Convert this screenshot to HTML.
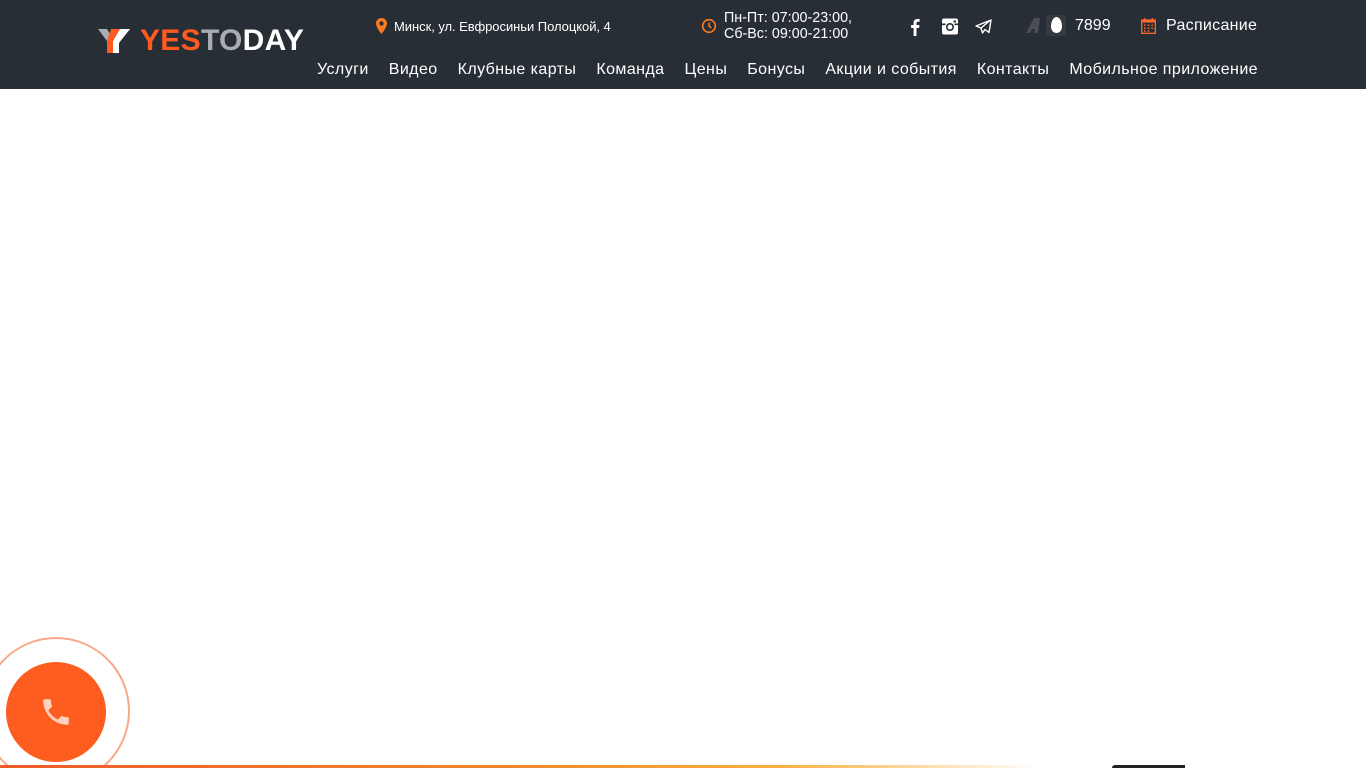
<!DOCTYPE html>
<html><head><meta charset="utf-8"><style>
*{margin:0;padding:0;box-sizing:border-box}
html,body{width:1366px;height:768px;overflow:hidden}
body{background:#fff;font-family:"Liberation Sans",sans-serif;position:relative}
.hdr{position:absolute;left:0;top:0;width:1366px;height:89px;background:#282e35;color:#fff}
.abs{position:absolute;white-space:nowrap}
.logo{left:140px;top:24px;font-size:30px;font-weight:bold;letter-spacing:0.3px;line-height:34px}
.nav{top:61px;right:108px;font-size:16px;letter-spacing:0.42px}
.nav span{margin-left:20px}
</style></head><body>
<div class="hdr">
<svg class="abs" style="left:98px;top:29px" width="33" height="24" viewBox="0 0 33 24"><polygon points="0,0 9,0 15,10 15,24 9,24 9,12" fill="#a9adb2"/><polygon points="9,12 13,0 22,0 15,12 15,24 9,24" fill="#ff5a1f"/><polygon points="15,12 22,0 32,0 21,14 21,24 15,24" fill="#fff"/></svg>
<div class="abs logo"><span style="color:#ff5a1f">YES</span><span style="color:#a9adb2">TO</span><span>DAY</span></div>
<svg class="abs" style="left:376px;top:18px" width="11" height="16" viewBox="0 0 11 16"><path d="M5.5 0C2.5 0 0 2.4 0 5.4 0 9.5 5.5 16 5.5 16S11 9.5 11 5.4C11 2.4 8.5 0 5.5 0zm0 7.6a2.2 2.2 0 110-4.4 2.2 2.2 0 010 4.4z" fill="#ff7a1f"/></svg>
<div class="abs" style="left:394px;top:19px;font-size:13px;letter-spacing:-0.05px">Минск, ул. Евфросиньи Полоцкой, 4</div>
<svg class="abs" style="left:701px;top:18px" width="16" height="16" viewBox="0 0 16 16"><circle cx="8" cy="8" r="6.3" fill="none" stroke="#ff7a1f" stroke-width="1.6"/><path d="M8 4.5V8l2.3 2" fill="none" stroke="#ff7a1f" stroke-width="1.5"/></svg>
<div class="abs" style="left:724px;top:11px;font-size:14.3px;line-height:15.5px">Пн-Пт: 07:00-23:00,<br>Сб-Вс: 09:00-21:00</div>
<svg class="abs" style="left:910px;top:18px" width="10" height="18" viewBox="0 0 10 18"><path d="M6.5 18V10h2.6l.4-3H6.5V5.2c0-.9.3-1.5 1.5-1.5H9.6V1.1C9.3 1 8.4 1 7.4 1 5.1 1 3.6 2.4 3.6 4.9V7H1v3h2.6v8z" fill="#fff"/></svg>
<svg class="abs" style="left:942px;top:18px" width="16" height="17" viewBox="0 0 16 17"><rect x="0" y="0.5" width="16" height="16" rx="2" fill="#fff"/><circle cx="8" cy="9" r="4" fill="#282e35"/><circle cx="8" cy="9" r="2.4" fill="#fff"/><rect x="0" y="5.5" width="3.5" height="1.6" fill="#282e35"/><rect x="12.5" y="5.5" width="3.5" height="1.6" fill="#282e35"/><rect x="11.5" y="2.5" width="2.5" height="2" fill="#282e35"/></svg>
<svg class="abs" style="left:975px;top:19px" width="17" height="15" viewBox="0 0 17 15"><path d="M16 1L1 7l5 2 1.5 5 2.5-3.5 4 3zM6 9l9-7.5" fill="none" stroke="#fff" stroke-width="1.4" stroke-linejoin="round"/></svg>
<svg class="abs" style="left:1024px;top:15px" width="20" height="20" viewBox="0 0 20 20"><path d="M2 18L10 3h6l-2 15h-4l1-4H8l-2 4z" fill="#4a4e53"/></svg>
<div class="abs" style="left:1046px;top:15px;width:20px;height:21px;background:#353a40"></div>
<div class="abs" style="left:1051px;top:17px;width:11px;height:16px;border-radius:50% 50% 50% 50%/60% 60% 40% 40%;background:#fff"></div>
<div class="abs" style="left:1075px;top:17px;font-size:16px">7899</div>
<svg class="abs" style="left:1141px;top:18px" width="15" height="16" viewBox="0 0 15 16"><rect x="0.7" y="2" width="13.6" height="13.3" fill="none" stroke="#ff6a2a" stroke-width="1.3"/><rect x="0.7" y="2" width="13.6" height="2.5" fill="#ff6a2a"/><rect x="3" y="0" width="1.3" height="3" fill="#ff6a2a"/><rect x="10.7" y="0" width="1.3" height="3" fill="#ff6a2a"/><g fill="#ff6a2a"><rect x="3" y="6.5" width="1.5" height="1.5"/><rect x="6.7" y="6.5" width="1.5" height="1.5"/><rect x="10.4" y="6.5" width="1.5" height="1.5"/><rect x="3" y="9.5" width="1.5" height="1.5"/><rect x="6.7" y="9.5" width="1.5" height="1.5"/><rect x="10.4" y="9.5" width="1.5" height="1.5"/><rect x="3" y="12.3" width="1.5" height="1.5"/><rect x="6.7" y="12.3" width="1.5" height="1.5"/></g></svg>
<div class="abs" style="left:1166px;top:17px;font-size:16px;letter-spacing:0.3px">Расписание</div>
<div class="abs nav"><span>Услуги</span><span>Видео</span><span>Клубные карты</span><span>Команда</span><span>Цены</span><span>Бонусы</span><span>Акции и события</span><span>Контакты</span><span>Мобильное приложение</span></div>
</div>
<div class="abs" style="left:-18px;top:637px;width:148px;height:148px;border-radius:50%;border:2px solid #f9a98a"></div>
<div class="abs" style="left:6px;top:662px;width:100px;height:100px;border-radius:50%;background:#ff5c1f"></div>
<svg class="abs" style="left:39px;top:695px" width="34" height="34" viewBox="0 0 24 24"><path d="M6.6 10.8c1.4 2.8 3.8 5.1 6.6 6.6l2.2-2.2c.3-.3.7-.4 1-.2 1.1.4 2.3.6 3.6.6.6 0 1 .4 1 1V20c0 .6-.4 1-1 1C10.6 21 3 13.4 3 4c0-.6.4-1 1-1h3.5c.6 0 1 .4 1 1 0 1.3.2 2.5.6 3.6.1.3 0 .7-.2 1z" fill="#ffd0bd"/></svg>
<div class="abs" style="left:0;top:765px;width:1040px;height:3px;background:linear-gradient(90deg,#ee5a2a,#f2882a 50%,#f8b040 75%,rgba(255,255,255,0))"></div>
<div class="abs" style="left:1112px;top:765px;width:73px;height:3px;background:#222;border-radius:3px 0 0 0"></div>
</body></html>
